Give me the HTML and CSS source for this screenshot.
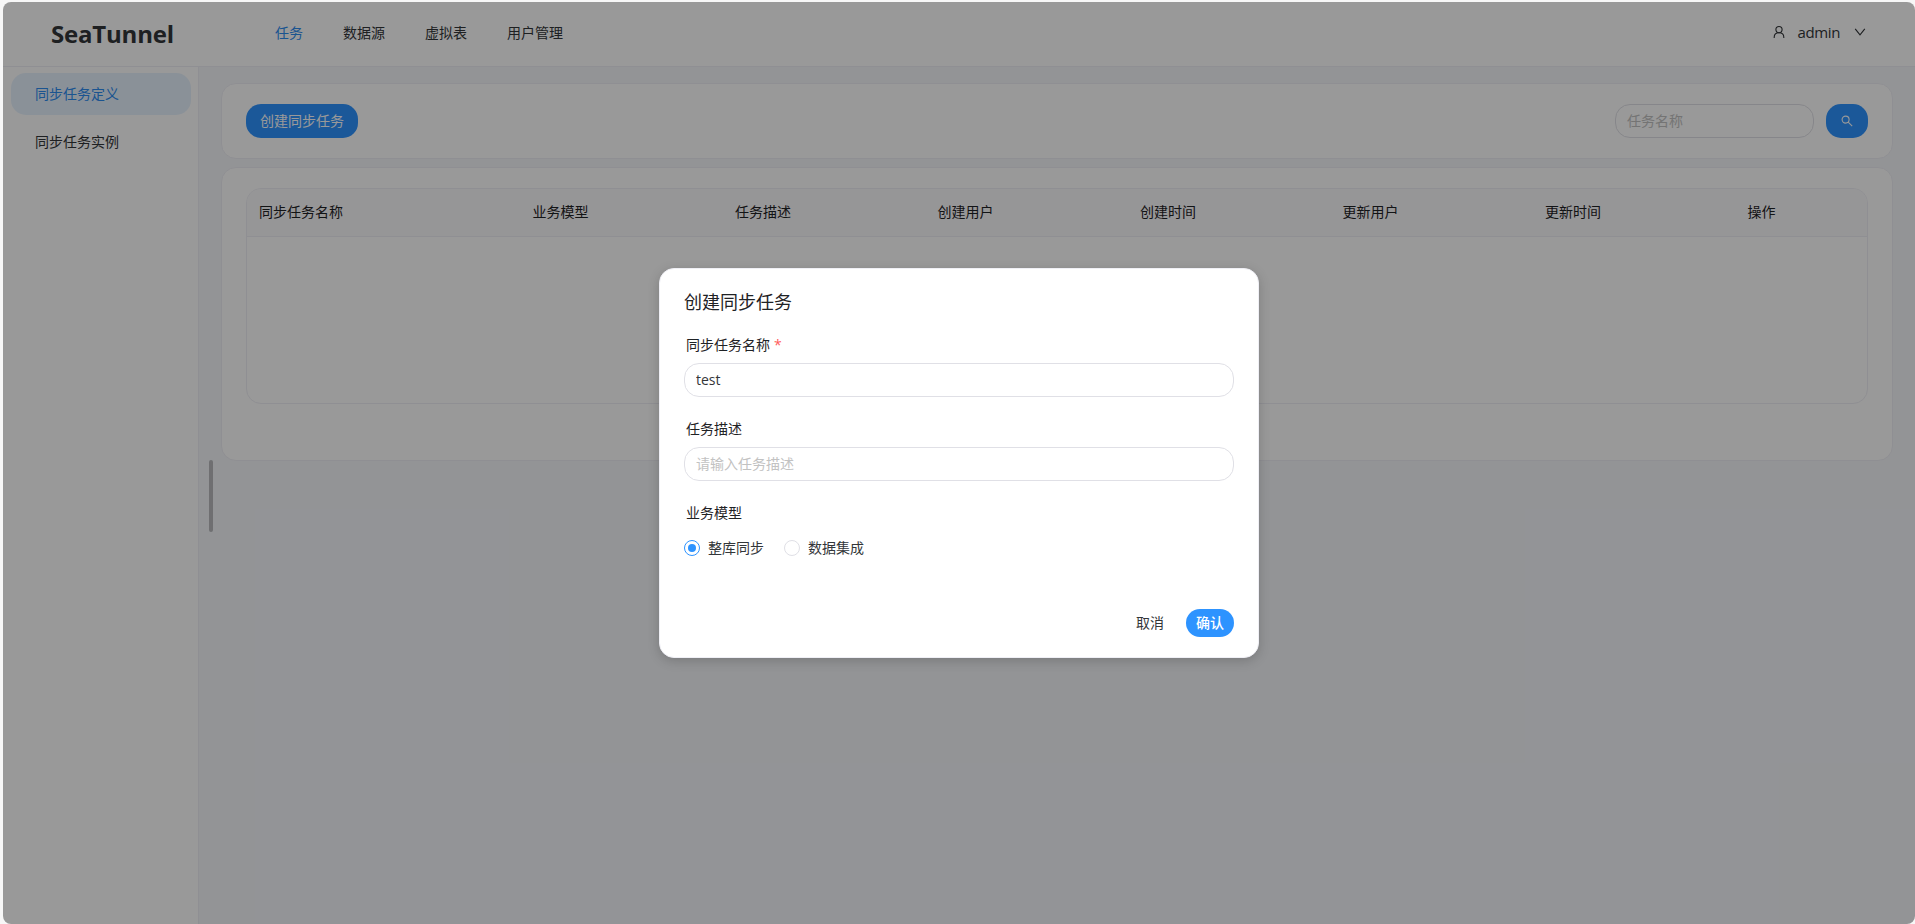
FILE: index.html
```html
<!DOCTYPE html>
<html lang="zh-CN">

<head>
  <meta charset="UTF-8">
  <title>SeaTunnel</title>
  <link rel="stylesheet" href="styles.css">
</head>

<body>
  <div class="app">
    <header class="header">
      <h1 class="logo">SeaTunnel</h1>
      <nav class="menu">
        <a class="menu-item active">任务</a>
        <a class="menu-item">数据源</a>
        <a class="menu-item">虚拟表</a>
        <a class="menu-item">用户管理</a>
      </nav>
      <div class="user">
        <svg class="user-icon" viewBox="0 0 12 14" width="12" height="14">
          <circle cx="6" cy="4.6" r="3.1" />
          <path d="M1.2 13V12.2C1.2 9.5 3.2 7.7 6 7.7S10.8 9.5 10.8 12.2V13" />
        </svg>
        <span class="user-name">admin</span>
        <svg class="arrow-icon" viewBox="0 0 12 8" width="12" height="8">
          <path d="M1.2 .8L6 6.8L10.8 .8" />
        </svg>
      </div>
    </header>
    <div class="main">
      <aside class="sidebar">
        <a class="side-item active">同步任务定义</a>
        <a class="side-item">同步任务实例</a>
      </aside>
      <div class="content">
        <div class="card toolbar">
          <button class="button create">创建同步任务</button>
          <div class="search">
            <input class="input" type="text" placeholder="任务名称">
            <button class="button search-button">
              <svg class="search-icon" viewBox="0 0 12 12" width="12" height="12">
                <circle cx="4.6" cy="4.6" r="3.5" />
                <path d="M7.2 7.2L11.2 11.2" />
              </svg>
            </button>
          </div>
        </div>
        <div class="card">
          <div class="table">
            <div class="table-head">
              <span>同步任务名称</span>
              <span>业务模型</span>
              <span>任务描述</span>
              <span>创建用户</span>
              <span>创建时间</span>
              <span>更新用户</span>
              <span>更新时间</span>
              <span>操作</span>
            </div>
            <div class="table-body"></div>
          </div>
        </div>
      </div>
    </div>
    <div class="scrollbar"></div>
    <div class="mask">
      <div class="modal">
        <h2 class="modal-title">创建同步任务</h2>
        <label class="label" for="name">同步任务名称<span class="required">*</span></label>
        <input class="input" type="text" id="name" value="test">
        <label class="label" for="description">任务描述</label>
        <input class="input" type="text" id="description" placeholder="请输入任务描述">
        <div class="label">业务模型</div>
        <div class="radios">
          <label class="radio"><span class="dot checked"></span>整库同步</label>
          <label class="radio"><span class="dot"></span>数据集成</label>
        </div>
        <div class="modal-footer">
          <button class="cancel">取消</button>
          <button class="button confirm">确认</button>
        </div>
      </div>
    </div>
  </div>
</body>

</html>
```
FILE: styles.css
```css
* {
  box-sizing: border-box;
}

body {
  margin: 0;
  padding: 2px 0 0 3px;
  height: 924px;
  overflow: hidden;
  background: #f7f7f7;
  color: #333639;
  font-family: "Open Sans", "Noto Sans CJK SC", sans-serif;
  font-size: 14px;
  line-height: 22px;
}

button,
input {
  font: inherit;
  color: inherit;
}

.app {
  position: relative;
  display: flex;
  flex-direction: column;
  height: 922px;
  border-radius: 8px;
  overflow: hidden;
  background: #fff;
}

.header {
  display: flex;
  align-items: center;
  height: 65px;
  padding: 0 49px 12px 48px;
  border-bottom: 1px solid #efeff5;
}

.logo {
  width: 224px;
  margin: 11px 0 0;
  font-size: 24px;
  letter-spacing: -0.2px;
  line-height: 32px;
}

.menu {
  display: flex;
  gap: 40px;
  margin-top: 9px;
}

.menu-item.active,
.side-item.active {
  color: #2d8cf0;
}

.user {
  display: flex;
  align-items: center;
  margin: 7px 0 0 auto;
}

.user-icon,
.arrow-icon,
.search-icon {
  fill: none;
  stroke: #333639;
  stroke-width: 1.1;
}

.user-name {
  margin: 0 14px 0 13px;
  font-size: 15px;
  letter-spacing: -0.4px;
}

.main {
  display: flex;
  flex: 1;
}

.sidebar {
  width: 196px;
  padding: 6px 7px 0 8px;
  border-right: 1px solid #efeff5;
}

.side-item {
  display: block;
  height: 42px;
  margin-bottom: 6px;
  padding-left: 24px;
  border-radius: 15px;
  line-height: 42px;
}

.side-item.active {
  background: #e7f2fe;
}

.content {
  flex: 1;
  padding: 16px 22px 0;
  background: #f5f7fb;
}

.card {
  height: 294px;
  padding: 20px 24px;
  border: 1px solid #efeff5;
  border-radius: 15px;
  background: #fff;
}

.toolbar {
  display: flex;
  justify-content: space-between;
  height: 76px;
  margin-bottom: 8px;
}

.button {
  height: 34px;
  padding: 0;
  border: none;
  border-radius: 15px;
  background: #2d93ff;
  color: #fff;
}

.create {
  width: 112px;
}

.search {
  display: flex;
  gap: 12px;
}

.search .input {
  width: 199px;
}

.search-button {
  display: flex;
  align-items: center;
  justify-content: center;
  width: 42px;
}

.search-icon {
  stroke: #fff;
}

.input {
  width: 100%;
  height: 34px;
  padding: 0 11px 2px;
  border: 1px solid #e0e0e6;
  border-radius: 15px;
  outline: none;
  background: #fff;
}

.input::placeholder {
  color: #c2c2c2;
}

.table {
  height: 216px;
  border: 1px solid #efeff5;
  border-radius: 15px;
  overflow: hidden;
}

.table-head {
  display: grid;
  grid-template-columns: 273.5px repeat(6, 202.5px) 1fr;
  height: 48px;
  padding-left: 12px;
  border-bottom: 1px solid #efeff5;
  background: #fafafc;
  color: #1f2225;
  line-height: 45px;
}

.scrollbar {
  position: absolute;
  left: 206px;
  top: 458px;
  width: 4px;
  height: 72px;
  border-radius: 2px;
  background: #b9babd;
}

.mask {
  position: absolute;
  inset: 0;
  padding: 266px 0 0 656px;
  background: rgba(0, 0, 0, 0.4);
}

.modal {
  width: 600px;
  height: 390px;
  padding: 20px 24px;
  border: 1px solid #efeff5;
  border-radius: 15px;
  background: #fff;
  box-shadow: 0 3px 12px rgba(0, 0, 0, 0.18);
}

.modal-title {
  margin: 0 0 18px;
  font-size: 18px;
  font-weight: 400;
  line-height: 26px;
  color: #1f2225;
}

.label {
  display: block;
  height: 30px;
  padding: 1px 0 0 2px;
  color: #1f2225;
}

.required {
  margin-left: 4px;
  color: #ff5c5c;
}

.modal .input {
  display: block;
  margin-bottom: 20px;
}

.radios {
  display: flex;
  gap: 20px;
  height: 34px;
}

.radio {
  display: flex;
  align-items: center;
}

.dot {
  width: 16px;
  height: 16px;
  margin-right: 8px;
  border: 1px solid #e0e0e6;
  border-radius: 50%;
}

.dot.checked {
  padding: 3px;
  border-color: #2d93ff;
  background: #2d93ff content-box;
}

.modal-footer {
  display: flex;
  justify-content: flex-end;
  gap: 22px;
  margin-top: 44px;
}

.cancel {
  height: 28px;
  padding: 0;
  border: none;
  background: none;
}

.confirm {
  width: 48px;
  height: 28px;
  border-radius: 14px;
  font-weight: 500;
}
```
